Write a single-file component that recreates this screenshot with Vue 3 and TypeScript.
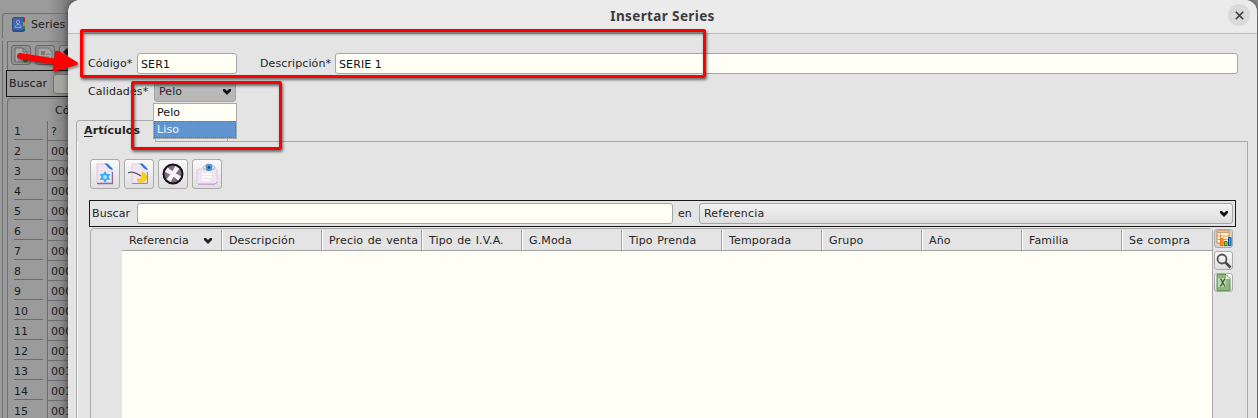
<script setup lang="ts">
const codes: string[] = ['?', '00000', '00001', '00002', '00003', '00004', '00005', '00006', '00007', '00008', '00009', '00100', '00101', '00102', '00103']
const columns: string[] = ['Referencia', 'Descripción', 'Precio de venta', 'Tipo de I.V.A.', 'G.Moda', 'Tipo Prenda', 'Temporada', 'Grupo', 'Año', 'Familia', 'Se compra']
const options: string[] = ['Pelo', 'Liso']
</script>

<template>
  <div class="screen">
    <div class="back">
      <div class="back-tab">
        <svg width="14" height="15" viewBox="0 0 14 15"><rect width="13" height="15" rx="2" fill="#2f4f8c" /><rect x="1" y="1" width="10" height="12" fill="#3f66ad" /><path d="M11 1h2v4h-2z" fill="#a82e22" /><path d="M11 5h2v4h-2z" fill="#a99a27" /><path d="M11 9h2v3h-2z" fill="#39802d" /><circle cx="6" cy="5" r="1.6" fill="none" stroke="#92a8ce" /><path d="M3 10.500c0-4 6-4 6 0z" fill="none" stroke="#92a8ce" /></svg>
        <span>Series</span>
      </div>
      <div class="back-page">
        <div class="back-tools">
          <span class="back-btn"><svg width="16" height="16" viewBox="0 0 16 16"><path d="M2 1h8l4 4v10H2z" fill="#aaa" stroke="#666" /><path d="M10 1v4h4" fill="none" stroke="#666" /><path d="M10 13h5M12.500 10.500v5" stroke="#3c7423" stroke-width="2.500" /></svg></span>
          <span class="back-btn"><svg width="16" height="16" viewBox="0 0 16 16"><path d="M1 1h10l4 4v10H1z" fill="#a5a5a5" stroke="#777" /><path d="M4 4h4v4H4z" fill="#8a7265" /><path d="M9 7h4M4 10h8M4 12h8" stroke="#84756d" /></svg></span>
          <span class="back-btn"><svg width="16" height="16" viewBox="0 0 16 16"><path d="M2 5l4-4 4 4-4 4z" fill="#222" /></svg></span>
        </div>
        <div class="back-search"><span>Buscar</span><i></i></div>
        <div class="back-table">
          <div class="back-head">Código</div>
          <div v-for="(code, i) in codes" :key="i" class="back-row"><b>{{ i + 1 }}</b><span>{{ code }}</span></div>
        </div>
      </div>
    </div>

    <section class="dialog">
      <header class="title-bar">
        <h1>Insertar Series</h1>
        <button class="close"><svg width="9" height="9" viewBox="0 0 9 9"><path d="M.8.8l7.400 7.400M8.200.8L.8 8.200" stroke="#373737" stroke-width="1.500" /></svg></button>
      </header>
      <div class="fields">
        <label class="code-label">Código*</label><div class="input code">SER1</div>
        <label class="desc-label">Descripción*</label><div class="input desc">SERIE 1</div>
      </div>
      <div class="quality">
        <label>Calidades*</label>
        <div class="combo pressed"><span>Pelo</span><svg width="8" height="6" viewBox="0 0 8 6"><path d="M0 0h2l2 2 2-2h2v2L4 6 0 2z" fill="#111" /></svg>
          <div class="popup"><div v-for="(o, i) in options" :key="o" :class="['option', { selected: i === 1 }]">{{ o }}</div></div>
        </div>
      </div>
      <div class="tabs"><div class="tab"><u>A</u>rtículos</div><div class="tab-next"></div></div>
      <main class="panel">
        <div class="tools">
          <button><svg width="20" height="22" viewBox="0 0 20 22"><path d="M2 1h10l5 5v14H2z" fill="#efe3f1" stroke="#d8cadc" /><path d="M2 20.500h15.500V9" fill="none" stroke="#946c94" stroke-width="1.300" /><path d="M9 .5c3 1 3 5 8.500 6.500V5.500l-5-5z" fill="#2578d8" /><path d="M10 8l1.800 3 3.500-.1-1.700 3 1.700 3-3.500-.1L10 20l-1.800-3.200-3.500.1 1.700-3-1.700-3 3.500.1z" fill="#37aaf6" /><circle cx="10" cy="14" r="2" fill="#9ce5ff" /></svg></button>
          <button><svg width="22" height="22" viewBox="0 0 22 22"><path d="M4 1h10l5 5v14H4z" fill="#f0e5f2" stroke="#ddd0e0" /><path d="M4 20.500h15.500V9" fill="none" stroke="#a584a8" /><path d="M11 .5c3 1 3 5 8.500 6.500V5.500l-5-5z" fill="#2578d8" /><path d="M0 10c5-2 8 0 13 3" fill="none" stroke="#665569" stroke-width="1.300" /><path d="M14 9.500c6 1 6 8 0 9.500-3 .5-5-1-4.500-3 3 .5 4.500-.5 4.500-2.500z" fill="#f8d313" stroke="#edc416" /></svg></button>
          <button><svg width="22" height="22" viewBox="0 0 22 22"><circle cx="11" cy="11" r="9.500" fill="#7c707f" stroke="#171019" stroke-width="2" /><path d="M8.500 3h5l-.5 6 6-.5v5l-6-.5.5 6h-5l.5-6-6 .5v-5l6 .5z" transform="rotate(33 11 11)" fill="#f8f3f9" /></svg></button>
          <button><svg width="22" height="22" viewBox="0 0 22 22"><rect x="1" y="6" width="20" height="15" rx="2" fill="#f1e4f2" stroke="#dac8dd" /><path d="M2 21.200h17l2-2" fill="none" stroke="#bb9abb" /><path d="M6 11h10M6 14h10M6 17h8" stroke="#fff" stroke-width="1.500" /><path d="M7 4.500c3-4.500 9-4.500 12 0-3 4-9 4-12 0z" fill="#fff" stroke="#aaa4ac" /><circle cx="13" cy="4.500" r="3.500" fill="#4596db" /><circle cx="13" cy="4.500" r="1.200" fill="#14436c" /></svg></button>
        </div>
        <div class="search"><span class="find">Buscar</span><div class="input query"></div><span class="in">en</span><div class="combo wide"><span>Referencia</span><svg width="8" height="6" viewBox="0 0 8 6"><path d="M0 0h2l2 2 2-2h2v2L4 6 0 2z" fill="#111" /></svg></div></div>
        <div class="data">
          <div class="table">
            <div class="corner"></div>
            <div class="grid">
              <div class="head"><div v-for="(c, i) in columns" :key="c" class="th"><span>{{ c }}</span><svg v-if="i === 0" width="8" height="6" viewBox="0 0 8 6"><path d="M0 0h2l2 2 2-2h2v2L4 6 0 2z" fill="#222" /></svg></div></div>
            </div>
          </div>
          <aside>
            <button class="on"><svg width="16" height="17" viewBox="0 0 16 17"><path d="M1 1h12v12H1z" fill="#fff0da" stroke="#c98948" /><path d="M1 2.500h12M1 6h12M1 9.500h12M4.500 2v11" stroke="#d99e61" /><path d="M4.500 8.500h2.500v7H4.500z" fill="#ffa143" stroke="#ef6b00" /><path d="M8.500 11.500h2.500v4H8.500z" fill="#a7cf65" stroke="#408212" /><path d="M12.500 7.500H15v8h-2.500z" fill="#5798d9" stroke="#075293" /></svg></button>
            <button><svg width="16" height="16" viewBox="0 0 16 16"><circle cx="6" cy="6" r="4.500" fill="#eee" stroke="#525252" stroke-width="1.800" /><path d="M9.500 9.500l5 5" stroke="#444" stroke-width="2.500" /></svg></button>
            <button><svg width="15" height="17" viewBox="0 0 15 17"><path d="M1 .5h9l4 4v12H1z" fill="#8eb67f" stroke="#6a975b" /><path d="M10 1v4h4z" fill="#e6f1df" /><path d="M2 4h8v9H2z" fill="#bdd8b0" /><path d="M4.500 4.500l4.500 8M9 4.500l-4.500 8" stroke="#43643b" stroke-width="1.500" /></svg></button>
          </aside>
        </div>
      </main>
    </section>

    <div class="mark mark-code"></div>
    <div class="mark mark-quality"></div>
    <svg class="arrow" width="68" height="32" viewBox="0 0 68 32"><path d="M6 8L49 15" stroke="#f00" stroke-width="6" stroke-linecap="round" /><path d="M41 4q0-2 4-1l18 11q2 2 0 3L42 23q-5 1-3-3z" fill="#f00" /></svg>
  </div>
</template>

<style>
body { overflow: hidden; }
</style>
<style scoped>
* { box-sizing: border-box; }
.screen { position: relative; width: 1258px; height: 418px; overflow: hidden; background: #8b8b8b; font: 11px/14px "DejaVu Sans", sans-serif; letter-spacing: .1px; color: #252525; }
button { padding: 0; margin: 0; display: flex; align-items: center; justify-content: center; border: 1px solid #aaa; border-radius: 3px; background: linear-gradient(#fafafa, #dedede); flex: none; }
svg { flex: none; display: block; }
.back { width: 160px; height: 418px; padding: 13px 0 0 2px; background: linear-gradient(90deg, #9b9b9b 0, #9b9b9b 48px, #7c7c7c 68px); color: #1b1b1b; }
.back-tab { height: 25px; border: 1px solid #707070; border-bottom: 0; border-radius: 3px 0 0; display: flex; align-items: center; padding: 0 0 3px 9px; gap: 5px; }
.back-page { height: 380px; border-left: 1px solid #707070; padding-left: 3px; }
.back-tools { height: 29px; margin: 3px 0 0 1px; border-left: 1px solid #6d6d6d; border-top: 1px solid #777; display: flex; padding: 3px 0 0 3px; gap: 4px; }
.back-btn { width: 20px; height: 20px; flex: none; border: 1px solid #686868; border-radius: 3px; background: #929292; display: flex; align-items: center; justify-content: center; }
.back-search { height: 27px; border: 1px solid #161616; display: flex; align-items: center; padding-left: 2px; }
.back-search i { width: 60px; height: 20px; margin-left: 6px; border: 1px solid #707070; border-radius: 3px; background: #a7a7a2; }
.back-table { margin: 1px 0 0 1px; border-left: 1px solid #727272; border-top: 1px solid #777; border-radius: 4px 0 0; padding: 0 0 0 6px; height: 330px; }
.back-head { height: 22px; padding: 5px 0 0 41px; }
.back-row { height: 20px; display: flex; }
.back-row b { width: 29px; font-weight: normal; padding-top: 4px; height: 19px; border-bottom: 1px solid #6b6b6b; }
.back-row span { width: 70px; margin-left: 4px; padding: 4px 0 0 3px; border: 1px solid #6b6b6b; border-width: 0 0 1px 1px; background: #a2a2a01c; }
.dialog { position: absolute; left: 68px; top: 0; width: 1189px; height: 430px; border-radius: 12px 12px 0 0; overflow: hidden; background: #e4e4e4; box-shadow: 0 0 6px #0008; display: flex; flex-direction: column; }
.title-bar { height: 34px; flex: none; background: #ebebeb; border-bottom: 1px solid #bdbdbd; display: grid; grid-template-columns: 29px 1fr 29px; padding: 0 8px; }
h1 { grid-column: 2; margin: 8px 0 0; text-align: center; font: bold 13.5px/16px "Noto Sans", sans-serif; letter-spacing: .38px; color: #3b3b3f; }
.close { width: 22px; height: 22px; border: 0; border-radius: 50%; background: #dadada; margin: 4px 0 0 8px; }
.input { height: 21px; background: #fffff6; border: 1px solid #a6a6a6; border-radius: 3px; color: #111; padding: 4px 3px 2px; flex: none; }
.fields { display: flex; align-items: center; margin-top: 19px; height: 21px; padding-left: 20px; flex: none; white-space: nowrap; }
.code-label { width: 49px; }
.code { width: 100px; margin-right: 23px; }
.desc-label { width: 75px; }
.desc { width: 903px; }
.quality { position: relative; z-index: 2; height: 21px; margin-top: 7px; padding-left: 20px; display: flex; align-items: center; flex: none; }
.quality label { width: 66px; }
.combo { height: 21px; border: 1px solid #a6a6a6; border-radius: 3px; background: linear-gradient(#f2f2f2, #dedede); padding: 0 4px; display: flex; align-items: center; justify-content: space-between; }
.pressed { position: relative; width: 82px; background: linear-gradient(#bebebe, #b5b5b5); }
.popup { position: absolute; z-index: 3; left: -2px; top: 21px; width: 84px; height: 36px; border: 1px solid #aaa; background: #fffff6; color: #111; }
.option { height: 17px; padding: 2px 3px; line-height: 13px; }
.selected { background: #6095cf; color: #edf5ff; outline: 1px dotted #9c6532; outline-offset: -1px; }
.tabs { height: 22px; margin: 18px 9px 0 8px; display: flex; flex: none; }
.tab { width: 80px; height: 22px; border: 1px solid #aaa; border-bottom: 0; border-radius: 4px 4px 0 0; padding: 3px 0 0 7px; font-weight: bold; }
.tab u { text-underline-offset: 2px; }
.tab-next { width: 72px; margin-top: 2px; border: 1px solid #aaa; border-width: 0 1px 1px 0; flex: none; }
.tabs::after { content: ""; flex: 1; border-bottom: 1px solid #aaa; }
.panel { flex: 1; margin: 0 9px 0 8px; padding: 17px 12px 0 13px; border: 1px solid #aaa; border-width: 0 1px 0 1px; box-shadow: inset 1px 0 #f8f8f8; }
.tools { height: 41px; display: flex; gap: 4px; }
.tools button { width: 30px; height: 30px; }
.search { height: 27px; width: 1147px; margin-left: -1px; border: 1px solid #171717; display: flex; align-items: center; padding-left: 2px; }
.find { width: 45px; }
.query { width: 536px; }
.in { width: 26px; padding-left: 5px; }
.wide { width: 534px; letter-spacing: .2px; }
.data { display: flex; gap: 1px; height: 210px; margin-top: 1px; }
.table { display: flex; width: 1123px; flex: none; border: 1px solid #aaa; border-radius: 4px 4px 0 0; }
.corner { width: 31px; flex: none; }
.grid { width: 1090px; background: #fffff6; overflow: hidden; }
.head { height: 22px; display: flex; background: #e4e4e4; border-bottom: 1px solid #a2a2a2; }
.th { width: 100px; flex: none; display: flex; align-items: center; justify-content: space-between; padding: 1px 9px 0 7px; margin-top: 1px; border-right: 1px solid #a2a2a2; white-space: nowrap; word-spacing: .8px; letter-spacing: .15px; }
.th + .th { box-shadow: inset 1px 0 white; }
.th:nth-child(3) { padding-right: 0; }
aside { display: flex; flex-direction: column; gap: 3px; padding-top: 1px; }
aside button { width: 19px; height: 19px; }
aside .on { background: #d2d2d2; }
.mark { position: absolute; border: 3px solid red; border-radius: 2px; box-shadow: 1px 2px 3px #0008, inset 1px 2px 3px #0008; z-index: 4; }
.mark-code { left: 80px; top: 29px; width: 626px; height: 49px; }
.mark-quality { left: 131px; top: 81px; width: 151px; height: 69px; }
.arrow { position: absolute; left: 14px; top: 48px; z-index: 5; filter: drop-shadow(1px 2px 1px #0006); }
</style>
